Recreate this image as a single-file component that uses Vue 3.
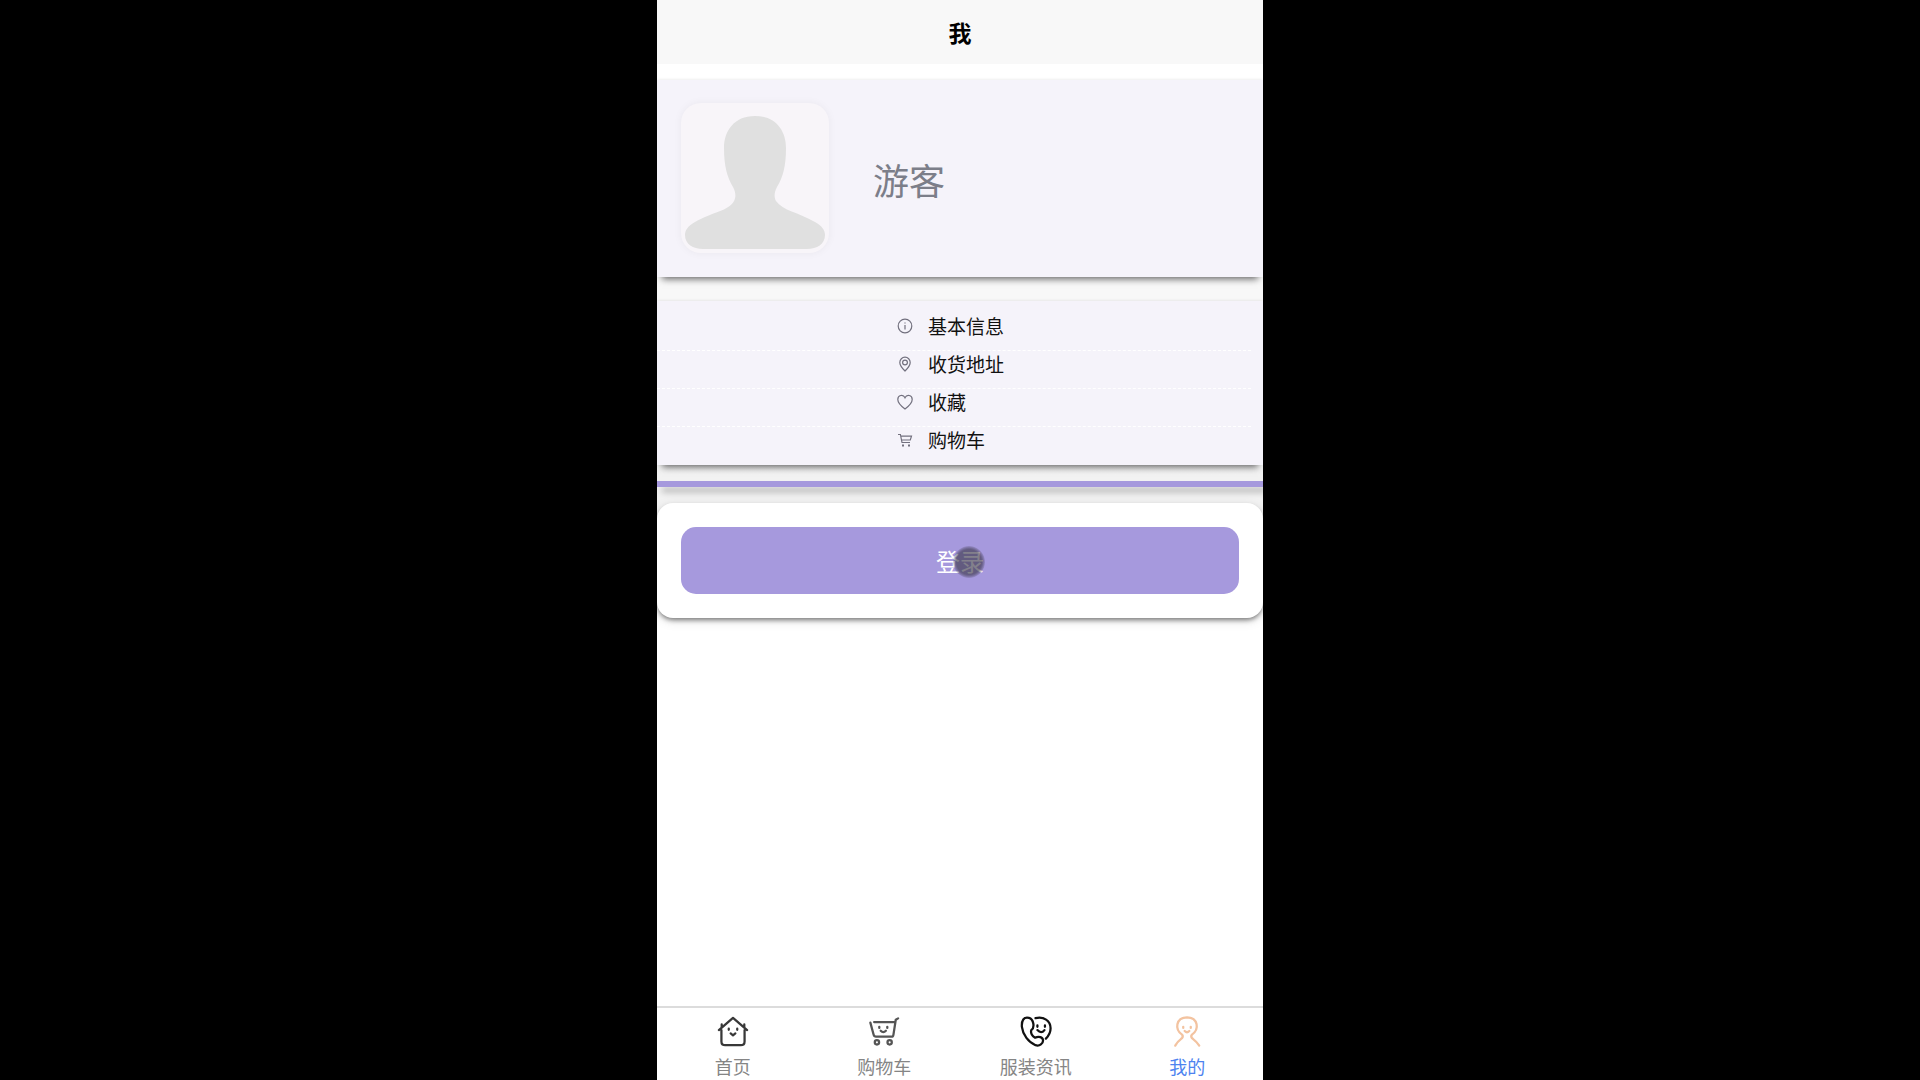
<script setup>
const menu = [
  { label: '基本信息', icon: 'info' },
  { label: '收货地址', icon: 'pin' },
  { label: '收藏', icon: 'heart' },
  { label: '购物车', icon: 'cart' },
]
const tabs = [
  { label: '首页', icon: 'home' },
  { label: '购物车', icon: 'basket' },
  { label: '服装资讯', icon: 'call' },
  { label: '我的', icon: 'me', active: true },
]
</script>

<template>
  <div class="phone">
    <header class="top"><h1>我</h1></header>

    <main class="content">
      <div class="panel">
        <section class="card profile">
          <div class="avatar">
            <svg viewBox="0 0 148 150" aria-hidden="true">
              <path
                fill="#e0e0e0"
                d="M74 13C53 13 43 28 43 45C43 63 46 74 52 84C55 90 55 94 53 98C48 108 31 109 14 119C7 123 4 127 4 132C4 141 12 146 22 146H126C136 146 144 141 144 132C144 127 141 123 134 119C117 109 102 108 95 98C93 94 93 90 96 84C102 74 105 63 105 45C105 28 95 13 74 13Z"
              />
            </svg>
          </div>
          <p class="name">游客</p>
        </section>

        <nav class="card menu" aria-label="我">
          <a v-for="item in menu" :key="item.label" href="#" class="row">
            <svg class="row-icon" viewBox="0 0 16 16" aria-hidden="true">
              <template v-if="item.icon === 'info'">
                <circle cx="8" cy="8" r="6.8" />
                <path d="M8 4.4v1.2M8 7v4.6" />
              </template>
              <template v-else-if="item.icon === 'pin'">
                <path d="M8 15C5 12 2.8 9.5 2.8 6.4A5.2 5.2 0 0 1 13.2 6.4C13.2 9.5 11 12 8 15Z" />
                <circle cx="8" cy="6.5" r="2.4" />
              </template>
              <path
                v-else-if="item.icon === 'heart'"
                d="M8 15C3.500 11.500 0.800 8.500 0.800 5.400C0.800 1 6.200 0 8 3.800C9.800 0 15.200 1 15.200 5.400C15.200 8.500 12.500 11.500 8 15Z"
              />
              <template v-else>
                <path d="M1 2.500H3.400L5 10.500H13M3.800 4.200H14.500L13.300 8H4.600" />
                <path d="M5 13.500h2M11 13.500h2" stroke-width="2" />
              </template>
            </svg>
            <span>{{ item.label }}</span>
          </a>
        </nav>

        <div class="divider"></div>
      </div>

      <section class="login-card">
        <button type="button" class="login">登录<i class="touch"></i></button>
      </section>
    </main>

    <nav class="tabs" aria-label="导航">
      <a v-for="tab in tabs" :key="tab.label" href="#" class="tab" :class="{ active: tab.active }">
        <svg class="tab-icon" :class="tab.icon" viewBox="0 0 34 34" aria-hidden="true">
          <template v-if="tab.icon === 'home'">
            <path d="M2 15L17 2L32 15M4.700 15V27Q4.700 31 8.700 31H25.300Q29.300 31 29.300 27V15M5 12V9M29 12V9" />
            <path d="M12.500 13.500v1.200M21.500 13.500v1.200M14.500 18.500L17 20.500L19.500 18.500" />
          </template>
          <template v-else-if="tab.icon === 'basket'">
            <path d="M2.500 7L6 20Q6.500 22 8.500 22H25Q26.700 22 27 20L29.500 4L32 2.500M6.500 6.500H28" />
            <path d="M12 11.500v1.200M20.500 11.500v1.200M13.500 15.700Q16.200 18.700 19 15.700" />
            <circle cx="9.500" cy="28" r="2.300" />
            <circle cx="23" cy="28" r="2.300" />
          </template>
          <template v-else-if="tab.icon === 'call'">
            <path d="M9.500 2C4 0.500 1.500 5 2 11.500C3 20 9 28 16.500 31C21 32.500 24.500 29 24.500 26C24.500 22.500 20 21 16 23C13 21.500 11 18 12 15C16 12 14.500 3.500 9.500 2Z" />
            <path d="M16.500 2.300C25 0 32.500 5 32.500 13C32.500 18 30.500 21 27.500 24" />
            <path d="M18.500 10v1.500M26.500 10v1.500M18.500 15Q22.500 19.500 26 15" />
          </template>
          <template v-else>
            <path d="M12 20C3.500 14 5 2 17 1.500C29 2 30.500 14 22 20M12 20Q13.500 22.500 10.500 24.500Q7 27 4.500 31.500M22 20Q20.500 22.500 23.500 24.500Q27 27 30 31.500" />
            <path d="M13 11.500v1.200M21 11.500v1.200M14.500 16Q17 18.500 19.500 16" />
          </template>
        </svg>
        <span>{{ tab.label }}</span>
      </a>
    </nav>
  </div>
</template>

<style>
body {
  background: #000;
}
</style>

<style scoped>
.phone {
  display: flex;
  flex-direction: column;
  box-sizing: border-box;
  width: 100%;
  max-width: 606px;
  min-height: 100vh;
  margin: 0 auto;
  overflow: hidden;
  background: #fff;
  color: #000;
  font-family: "Noto Sans CJK SC", sans-serif;
}
.top {
  display: flex;
  align-items: center;
  justify-content: center;
  height: 64px;
  background: #f8f8f8;
}
h1 {
  margin: 0;
  font-size: 23px;
  line-height: 32px;
  font-weight: 700;
}
.content {
  flex: 1;
  padding-top: 16px;
}
.panel {
  margin-bottom: -16px;
  padding-bottom: 32px;
  background: linear-gradient(#f8f8f8 60%, #f2f2f2 90%);
}
.card {
  background: #f5f3fa;
  box-shadow: 0 7px 7px -5px rgba(0, 0, 0, 0.6), 0 -1px 3px -1px rgba(0, 0, 0, 0.12);
}
.profile {
  display: flex;
  align-items: center;
  gap: 44px;
  padding: 23px 24px 24px;
}
.avatar {
  width: 148px;
  height: 150px;
  border-radius: 20px;
  background: #f8f5f9;
  box-shadow: 0 0 8px rgba(0, 0, 0, 0.05);
}
.avatar svg {
  display: block;
  width: 100%;
  height: 100%;
}
.name {
  margin: 0;
  padding-top: 2px;
  color: #7c7e89;
  font-size: 36px;
  line-height: 48px;
}
.menu {
  margin-top: 24px;
  padding-top: 12px;
}
.row {
  display: flex;
  align-items: center;
  gap: 15px;
  box-sizing: border-box;
  height: 38px;
  margin-right: 12px;
  padding: 0 0 12px 240px;
  border-bottom: 1px dashed #fff;
  color: #111;
  font-size: 19px;
  line-height: 25px;
  text-decoration: none;
}
.row:last-child {
  border-bottom-color: transparent;
}
.row-icon {
  width: 16px;
  height: 16px;
  fill: none;
  stroke: #72707e;
  stroke-width: 1.2;
}
.divider {
  height: 6px;
  margin-top: 16px;
  background: #a699dd;
  box-shadow: 4px 6px 6px -1px rgba(0, 0, 0, 0.3);
}
.login-card {
  position: relative;
  padding: 24px;
  border-radius: 16px;
  background: #fff;
  box-shadow: 0 3px 5px -1px rgba(0, 0, 0, 0.5), 0 3px 12px rgba(0, 0, 0, 0.1);
}
.login {
  position: relative;
  display: block;
  width: 100%;
  height: 67px;
  padding: 0;
  border: 0;
  border-radius: 15px;
  background: #a699dd;
  color: #fff;
  font-family: inherit;
  font-size: 24px;
  line-height: 36px;
}
.touch {
  position: absolute;
  top: 50%;
  left: 50%;
  width: 32px;
  height: 32px;
  margin: -15px 0 0 -7px;
  border-radius: 50%;
  background: radial-gradient(closest-side, rgba(60, 56, 74, 0.64) 0 78%, rgba(60, 56, 74, 0.5) 86%, rgba(60, 56, 74, 0.15) 100%);
}
.tabs {
  display: flex;
  height: 72px;
  border-top: 2px solid #dcdcdc;
  background: #fff;
}
.tab {
  display: flex;
  flex: 1;
  flex-direction: column;
  align-items: center;
  gap: 4px;
  padding-top: 8px;
  color: #858585;
  font-size: 18px;
  line-height: 28px;
  text-decoration: none;
}
.tab.active {
  color: #4d83f0;
}
.tab-icon {
  width: 34px;
  height: 34px;
  fill: none;
  stroke: #383838;
  stroke-width: 2.4;
  stroke-linecap: round;
  stroke-linejoin: round;
}
.tab-icon.call {
  stroke: #111;
}
.tab-icon.basket {
  stroke: #555;
}
.tab-icon.me {
  stroke: #f3c3a0;
}
</style>
